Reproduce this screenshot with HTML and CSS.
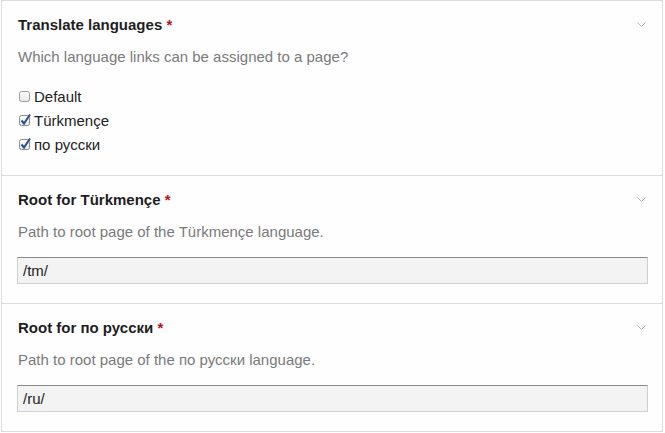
FILE: index.html
```html
<!DOCTYPE html>
<html>
<head>
<meta charset="utf-8">
<link rel="stylesheet" href="styles.css">
</head>
<body>
<div class="panel">
  <section class="field first">
    <div class="head">
      <span class="title">Translate languages <span class="req">*</span></span>
      <svg class="chev" width="9" height="5" viewBox="0 0 9 5"><path d="M0.5 0.5 L4.5 4.5 L8.5 0.5" fill="none" stroke="#b5b5b5" stroke-width="1"/></svg>
    </div>
    <div class="desc">Which language links can be assigned to a page?</div>
    <div class="options">
      <label class="opt">
        <svg class="cb" width="14" height="14" viewBox="0 0 14 14"><defs><linearGradient id="g1" x1="0" y1="0" x2="0" y2="1"><stop offset="0" stop-color="#ffffff"/><stop offset="1" stop-color="#e6e6e6"/></linearGradient></defs><rect x="1.5" y="2.5" width="10" height="10" rx="2" fill="url(#g1)" stroke="#9a9a9a"/></svg>
        <span>Default</span>
      </label>
      <label class="opt">
        <svg class="cb" width="14" height="14" viewBox="0 0 14 14"><rect x="1.5" y="2.5" width="10" height="10" rx="2" fill="url(#g1)" stroke="#8a8a8a"/><path d="M3.5 7.5 L6 10.5 L12 1.5" fill="none" stroke="#2a4f8f" stroke-width="2"/></svg>
        <span>Türkmençe</span>
      </label>
      <label class="opt">
        <svg class="cb" width="14" height="14" viewBox="0 0 14 14"><rect x="1.5" y="2.5" width="10" height="10" rx="2" fill="url(#g1)" stroke="#8a8a8a"/><path d="M3.5 7.5 L6 10.5 L12 1.5" fill="none" stroke="#2a4f8f" stroke-width="2"/></svg>
        <span>по русски</span>
      </label>
    </div>
  </section>
  <section class="field">
    <div class="head">
      <span class="title">Root for Türkmençe <span class="req">*</span></span>
      <svg class="chev" width="9" height="5" viewBox="0 0 9 5"><path d="M0.5 0.5 L4.5 4.5 L8.5 0.5" fill="none" stroke="#b5b5b5" stroke-width="1"/></svg>
    </div>
    <div class="desc">Path to root page of the Türkmençe language.</div>
    <input class="text" type="text" value="/tm/">
  </section>
  <section class="field">
    <div class="head">
      <span class="title">Root for по русски <span class="req">*</span></span>
      <svg class="chev" width="9" height="5" viewBox="0 0 9 5"><path d="M0.5 0.5 L4.5 4.5 L8.5 0.5" fill="none" stroke="#b5b5b5" stroke-width="1"/></svg>
    </div>
    <div class="desc">Path to root page of the по русски language.</div>
    <input class="text" type="text" value="/ru/">
  </section>
</div>
</body>
</html>
```
FILE: styles.css
```css
html, body {
  margin: 0;
  padding: 0;
  background: #ffffff;
}
body {
  font-family: "Liberation Sans", Arial, sans-serif;
  font-size: 15px;
  color: #222222;
}
.panel {
  margin-left: 1px;
  width: 662px;
  height: 432px;
  box-sizing: border-box;
  border: 1px solid #dcdcdc;
  background: #fefefe;
}
.field {
  border-top: 1px solid #dcdcdc;
  padding: 15px 14px 19px 15px;
}
.field.first {
  border-top: none;
}
.head {
  display: flex;
  justify-content: space-between;
  align-items: center;
  height: 18px;
  line-height: 18px;
}
.title {
  font-weight: bold;
  color: #1e1e1e;
  padding-left: 1px;
}
.req {
  color: #b0141c;
}
.chev {
  display: block;
  margin-right: 2px;
  margin-top: -1px;
}
.desc {
  margin-top: 14px;
  line-height: 18px;
  color: #7a7a7a;
  padding-left: 1px;
}
.options {
  margin-top: 18px;
  display: flex;
  flex-direction: column;
}
.opt {
  display: flex;
  align-items: center;
  height: 24px;
  gap: 2px;
  color: #222222;
}
.cb {
  display: block;
  margin-left: 1px;
}
.text {
  display: block;
  margin-top: 16px;
  width: 100%;
  height: 27px;
  box-sizing: border-box;
  border: 1px solid #cfcfcf;
  border-top-color: #8a8a8a;
  background: #f3f3f3;
  font-family: "Liberation Sans", Arial, sans-serif;
  font-size: 15px;
  color: #222222;
  padding: 0 5px;
  outline: none;
}
```
